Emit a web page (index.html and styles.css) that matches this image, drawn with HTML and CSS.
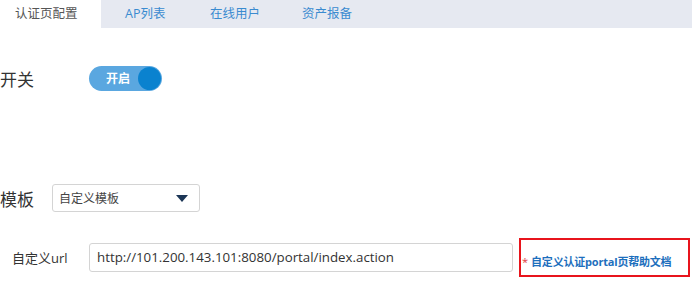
FILE: index.html
```html
<!DOCTYPE html>
<html lang="zh">
<head>
    <meta charset="UTF-8">
    <title>认证页配置</title>
    <link rel="stylesheet" href="styles.css">
</head>
<body>
    <!-- 标签栏 -->
    <div class="tabs">
        <div class="tab active">认证页配置</div>
        <div class="tab">AP列表</div>
        <div class="tab">在线用户</div>
        <div class="tab">资产报备</div>
    </div>

    <div class="content">
        <!-- 开关 -->
        <div class="row row-switch">
            <span class="label">开关</span>
            <div class="switch">
                <span class="switch-text">开启</span>
                <span class="knob"></span>
            </div>
        </div>

        <!-- 模板 -->
        <div class="row row-template">
            <span class="label">模板</span>
            <div class="select">
                <span>自定义模板</span>
                <span class="arrow"></span>
            </div>
        </div>

        <!-- 自定义url -->
        <div class="row row-url">
            <span class="small-label">自定义url</span>
            <div class="input">http://101.200.143.101:8080/portal/index.action</div>
            <div class="help">
                <span class="star">*</span>
                <a class="help-link">自定义认证portal页帮助文档</a>
            </div>
        </div>
    </div>
</body>
</html>
```

FILE: styles.css
```css
* {
    margin: 0;
    padding: 0;
    box-sizing: border-box;
}

body {
    width: 692px;
    height: 292px;
    background: #ffffff;
    font-family: "Open Sans", "Noto Sans CJK SC", sans-serif;
    color: #333;
    overflow: hidden;
}

.tabs {
    display: flex;
    height: 28px;
    background-color: #e6e9f1;
}

.tab {
    font-size: 12.5px;
    color: #3a8bd0;
    line-height: 28px;
    height: 28px;
}

.tab:nth-child(1) {
    width: 101px;
    padding-left: 15px;
    background: #ffffff;
    color: #555;
}

.tab:nth-child(2) { padding-left: 24px; width: 109px; }
.tab:nth-child(3) { width: 92px; }

.content {
    display: flex;
    flex-direction: column;
}

.row {
    display: flex;
    align-items: center;
}

.label {
    font-size: 17px;
    color: #333;
}

.row-switch {
    margin-top: 37px;
    height: 26px;
}

.switch {
    margin-left: 55px;
    width: 73px;
    height: 25px;
    border-radius: 13px;
    background-color: #5aa7e0;
    display: flex;
    align-items: center;
    justify-content: space-between;
    padding: 0 1px 0 17px;
}

.switch-text {
    color: #fff;
    font-size: 12px;
    font-weight: bold;
}

.knob {
    width: 23px;
    height: 23px;
    border-radius: 50%;
    background-color: #0a82cf;
}

.row-template {
    margin-top: 93px;
    height: 28px;
}

.select {
    margin-left: 18px;
    width: 148px;
    height: 28px;
    border: 1px solid #d4d4d4;
    border-radius: 3px;
    display: flex;
    align-items: center;
    justify-content: space-between;
    padding: 0 11px 0 6px;
    font-size: 12px;
    color: #444;
}

.arrow {
    width: 0;
    height: 0;
    border-left: 6px solid transparent;
    border-right: 6px solid transparent;
    border-top: 7px solid #1c3656;
}

.row-url {
    margin-top: 25px;
    height: 40px;
}

.small-label {
    margin-left: 12px;
    width: 77px;
    font-size: 13px;
    color: #333;
}

.input {
    width: 424px;
    height: 29px;
    border: 1px solid #d4d4d4;
    border-radius: 3px;
    font-size: 13.3px;
    line-height: 27px;
    padding-left: 7px;
    color: #333;
}

.help {
    margin-left: 6px;
    width: 171px;
    height: 39px;
    border: 2px solid #e8141c;
    display: flex;
    align-items: center;
    padding: 8px 0 0 1px;
}

.star {
    color: #e0393e;
    font-size: 11px;
    margin-right: 3px;
}

.help-link {
    color: #1d6fbd;
    font-size: 11px;
    font-weight: bold;
    letter-spacing: -0.2px;
}
```
